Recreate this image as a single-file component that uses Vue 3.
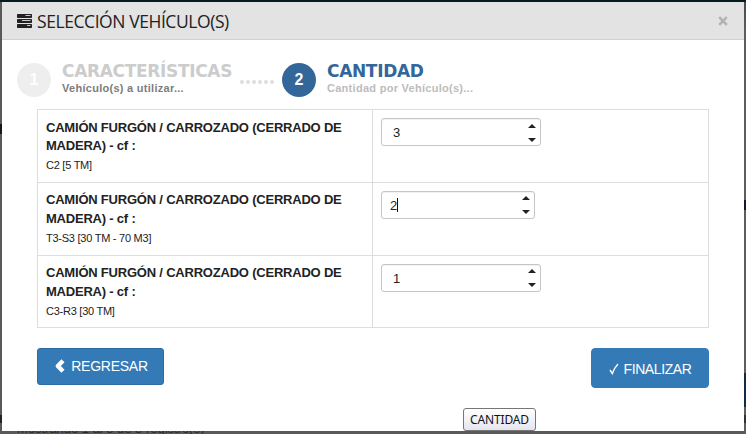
<script setup>
import { ref } from 'vue'

const name = 'CAMIÓN FURGÓN / CARROZADO (CERRADO DE MADERA) - cf :'
const rows = ref([
  { detail: 'C2 [5 TM]', qty: 3, focused: false },
  { detail: 'T3-S3 [30 TM - 70 M3]', qty: 2, focused: true },
  { detail: 'C3-R3 [30 TM]', qty: 1, focused: false }
])
</script>

<template>
  <div class="page">
    <div class="behind">Mostrando 1 al 3 de 3 registro(s)</div>
    <div class="edge left"><i class="m1"></i><i class="m2"></i></div>
    <div class="edge right"><i class="r1"></i><i class="r2"></i><i class="r3"></i></div>
    <section class="modal">
      <header class="head">
        <svg class="server" width="15" height="14" viewBox="0 0 15 14">
          <path fill="#222" d="M.7 0h13.6q.7 0 .7.7v2.6q0 .7-.7.7H.7Q0 4 0 3.300V.7Q0 0 .7 0zM.7 5h13.600q.7 0 .7.7v2.600q0 .7-.7.7H.7Q0 9 0 8.300V5.700Q0 5 .7 5zM.7 10h13.600q.7 0 .7.7v2.600q0 .7-.7.7H.7Q0 14 0 13.300v-2.600Q0 10 .7 10z" />
          <path stroke="#c9c9c9" stroke-width="1" d="M8.500 1.500h5M5 6.500h8.500M10 11.500h3.500" />
        </svg>
        <h1 class="title">SELECCIÓN VEHÍCULO(S)</h1>
        <svg class="close" width="10" height="10" viewBox="0 0 10 10">
          <path d="M1.200 1.200l7.600 7.600M8.800 1.200L1.200 8.800" stroke="#b2b2b2" stroke-width="2.500" />
        </svg>
      </header>
      <div class="steps">
        <div class="num off">1</div>
        <div class="step first">
          <div class="label">CARACTERÍSTICAS</div>
          <div class="desc">Vehículo(s) a utilizar...</div>
        </div>
        <div class="dots"><i v-for="n in 6" :key="n"></i></div>
        <div class="num on">2</div>
        <div class="step second">
          <div class="label">CANTIDAD</div>
          <div class="desc">Cantidad por Vehículo(s)...</div>
        </div>
      </div>
      <div class="grid">
        <div v-for="row in rows" :key="row.detail" class="row">
          <div class="cell">
            <div class="name">{{ name }}</div>
            <div class="detail">{{ row.detail }}</div>
          </div>
          <div class="cell">
            <div class="spinner" :class="{ focused: row.focused }">
              <span class="qty">{{ row.qty }}</span><span v-if="row.focused" class="caret"></span>
              <svg class="arrows" width="8" height="18" viewBox="0 0 8 18">
                <path d="M4 0l4 4H0zM4 18l4-4H0z" fill="#222" />
              </svg>
            </div>
          </div>
        </div>
      </div>
      <div class="actions">
        <button class="btn back">
          <svg width="11" height="14" viewBox="0 0 11 14"><path d="M9 1.800L3.800 7 9 12.200" fill="none" stroke="#fff" stroke-width="4.400" stroke-linejoin="round" /></svg>
          <span>REGRESAR</span>
        </button>
        <button class="btn finish">
          <svg width="10" height="12" viewBox="0 0 10 12"><path d="M1 7l2.400 3.600Q5.500 4.500 9 1" fill="none" stroke="#fff" stroke-width="1.400" /></svg>
          <span>FINALIZAR</span>
        </button>
      </div>
    </section>
    <div class="tip">CANTIDAD</div>
  </div>
</template>

<style>
body { margin: 0; overflow: hidden; }
</style>

<style scoped>
* { box-sizing: border-box; }
.page { position: relative; width: 746px; height: 434px; padding: 2px 2px 3px; overflow: hidden; background: #58595a; font-family: "Liberation Sans", Arial, sans-serif; color: #222; }
.behind { position: absolute; left: 17px; top: 421px; font-size: 13px; line-height: 16px; letter-spacing: -.02px; color: #2b2b2b; white-space: nowrap; }
.page::before { content: ""; position: absolute; left: 0; top: 0; width: 746px; height: 2px; background: #061b20; }
.edge { position: absolute; top: 2px; width: 2px; height: 432px; overflow: hidden; }
.edge i { position: absolute; left: 0; width: 2px; }
.left { left: 0; }
.right { right: 0; background: linear-gradient(#444b4d, #5c5d5e 28px); }
.m1 { top: 122px; height: 10px; background: #171717; }
.m2 { top: 413px; height: 8px; background: #242424; }
.r1 { top: 198px; height: 10px; background: #151633; }
.r2 { top: 371px; height: 34px; background: #102c48; }
.r3 { top: 413px; height: 8px; background: #303336; }
.modal { position: relative; width: 742px; height: 429px; background: #fff; }
.head { display: flex; align-items: center; height: 38px; padding: 0 16px 0 15px; background: #e3e3e3; border-bottom: 1px solid #d1d1d1; }
.server { flex: none; }
.title { margin: 1px 0 0 5px; font: 400 17.5px/24px "Open Sans", "Noto Sans", sans-serif; letter-spacing: -.43px; white-space: nowrap; }
.close { margin-left: auto; }
.steps { display: flex; height: 69px; padding: 23px 0 0 15px; }
.num { width: 34px; height: 34px; flex: none; border-radius: 50%; font: bold 16px/34px "Liberation Sans", Arial, sans-serif; text-align: center; color: #fff; }
.off { background: #eee; }
.on { background: #336699; }
.step { white-space: nowrap; padding-left: 11px; }
.first { width: 189px; }
.label { font: bold 17px/20px "DejaVu Sans", Verdana, sans-serif; letter-spacing: -.33px; color: #ccc; margin-top: -2px; }
.desc { font-size: 11px; font-weight: bold; line-height: 14px; letter-spacing: .28px; color: #7d7d7d; }
.second .label { color: #336699; }
.second .desc { color: #bcbcbc; }
.dots { display: flex; gap: 2px; width: 42px; padding-top: 17px; }
.dots i { width: 4px; height: 4px; border-radius: 50%; background: #dedede; }
.grid { width: 672px; margin-left: 35px; border: 1px solid #ddd; border-top: 0; }
.row { display: grid; grid-template-columns: 334px 336px; height: 72.8px; border-top: 1px solid #ddd; }
.cell { padding: 8px; }
.cell + .cell { border-left: 1px solid #ddd; }
.name { width: 310px; padding-top: .5px; font-size: 13px; font-weight: bold; line-height: 18.6px; letter-spacing: -.21px; }
.detail { margin-top: 1.5px; font-size: 11px; line-height: 16px; letter-spacing: -.25px; white-space: nowrap; }
.spinner { display: flex; align-items: center; width: 160px; height: 28px; padding: 1px 4px 0 11px; border: 1px solid #c5c5c5; border-radius: 3px; font-size: 13px; box-shadow: inset 0 1px 1px rgba(0,0,0,.06); }
.spinner.focused { width: 154px; padding-left: 8px; }
.caret { width: 1px; height: 14px; background: #111; }
.arrows { margin-left: auto; }
.actions { display: flex; justify-content: space-between; align-items: flex-start; width: 672px; margin: 20px 0 0 35px; }
.btn { display: flex; align-items: center; justify-content: center; padding: 0; border: 1px solid #2e6da4; border-radius: 3px; background: #337ab7; color: #fff; font: 14px/20px "Liberation Sans", Arial, sans-serif; }
.back { width: 127px; height: 37px; gap: 6px; padding: 0 0 2px 1px; letter-spacing: -.25px; }
.finish { width: 118px; height: 40px; gap: 5px; border-color: #337ab7; border-radius: 4px; padding-top: 1px; letter-spacing: -.4px; }
.tip { position: absolute; left: 463px; top: 408px; width: 73px; height: 23px; border: 1px solid #767676; border-radius: 3px; background: linear-gradient(#fff, #e5e5f0); color: #111; font: 12px/21px "Noto Sans", sans-serif; text-align: center; letter-spacing: -.15px; }
</style>
